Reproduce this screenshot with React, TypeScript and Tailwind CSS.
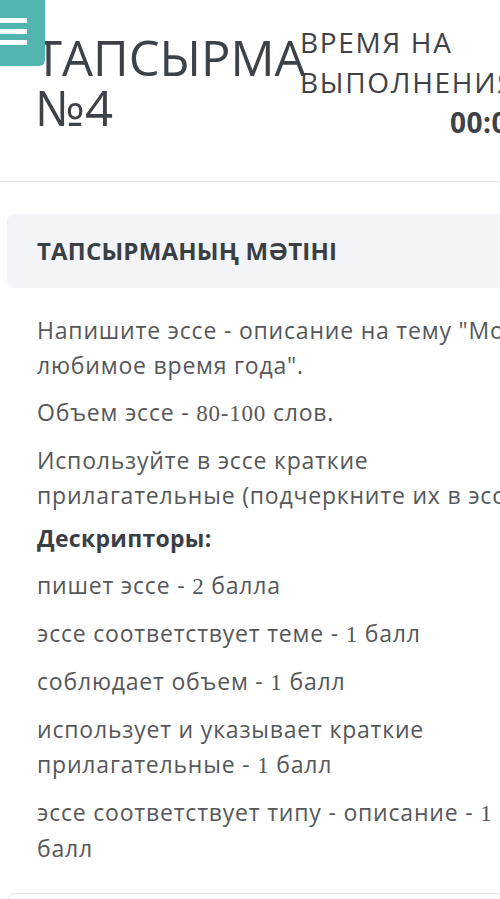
const num = "font-['Liberation_Serif',serif]";

const Descriptors = [
  <>пишет эссе - <span className={num}>2</span> балла</>,
  <>эссе соответствует теме - <span className={num}>1</span> балл</>,
  <>соблюдает объем - <span className={num}>1</span> балл</>,
  <>использует и указывает краткие прилагательные - <span className={num}>1</span> балл</>,
  <>эссе соответствует типу - описание - <span className={num}>1</span> балл</>,
];

const App = () => {
  return (
    <div className="relative w-[500px] h-[899px] overflow-hidden bg-white font-['Open_Sans',sans-serif]">
      <div className="w-[620px]">
        {/* header: task number + timer */}
        <div className="flex items-center pt-[22px] pb-[39px] border-b border-[#e6e7ea]">
          <h1 className="w-[300px] shrink-0 pl-[35px] pr-[20px] text-[49px] leading-[50px] text-[#3d4248] font-normal">
            ТАПСЫРМА №4
          </h1>
          <div className="w-[266px] shrink-0 text-[28px] leading-[40px] tracking-[1.7px] text-[#3d4248] whitespace-nowrap">
            <div>ВРЕМЯ НА</div>
            <div>ВЫПОЛНЕНИЯ:</div>
            <div className="text-right font-bold tracking-[0.5px]">00:00:00</div>
          </div>
        </div>

        <div className="px-[7px] pt-[32px]">
          <div className="rounded-lg bg-[#f3f4f7] h-[74px] flex items-center pl-[30px]">
            <h2 className="text-[24px] font-bold text-[#3a3f45] tracking-[0.2px]">
              ТАПСЫРМАНЫҢ МӘТІНІ
            </h2>
          </div>

          <div className="w-[532px] pl-[30px] pt-[25px] text-[23px] leading-[35px] tracking-[0.8px] text-[#555759]">
            <p className="mb-3">Напишите эссе - описание на тему "Мое любимое время года".</p>
            <p className="mb-3">
              Объем эссе - <span className={num}>80-100</span> слов.
            </p>
            <p className="mb-2">Используйте в эссе краткие прилагательные (подчеркните их в эссе).</p>
            <p className="mb-3 font-bold text-[#3a3f45] tracking-[0.3px]">Дескрипторы:</p>
            {Descriptors.map((d, i) => (
              <p key={i} className="mb-3">
                {d}
              </p>
            ))}
          </div>

          <div className="mt-[27px] h-[40px] rounded-t-lg border border-[#e4e5e8]" />
        </div>
      </div>

      {/* menu toggle */}
      <button className="absolute top-0 left-0 w-[45px] h-[66px] rounded-br-md bg-[#52b4ae] flex flex-col gap-[6px] pt-[18px]">
        <span className="block h-[5px] w-[27px] bg-white" />
        <span className="block h-[5px] w-[27px] bg-white" />
        <span className="block h-[5px] w-[27px] bg-white" />
      </button>
    </div>
  );
};

export default App;
